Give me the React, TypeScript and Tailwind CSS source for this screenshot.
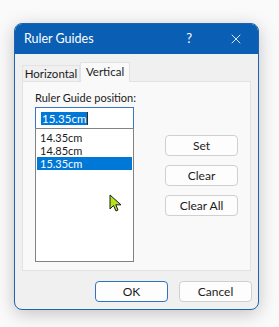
import { X } from "lucide-react";

const font = { fontFamily: 'Lato, "Liberation Sans", sans-serif' };

const Btn = ({ label, primary }: { label: string; primary?: boolean }) => (
  <button
    className={`flex h-[21px] w-[73px] items-center justify-center rounded-[4px] border bg-[#fdfdfd] text-[12px] leading-none text-[#1b1b1b] ${
      primary ? "border-[#2e73c3]" : "border-[#d0d0d0]"
    }`}
  >
    {label}
  </button>
);

const App = () => {
  const guides = ["14.35cm", "14.85cm", "15.35cm"];

  return (
    <div className="relative h-[327px] w-[279px] bg-[#fafafa] pl-[14px] pt-[23px]" style={font}>
      <div className="flex h-[287px] w-[245px] flex-col overflow-hidden rounded-[8px] border border-[#1f63ad] bg-[#f0f0f0] shadow-[0_4px_18px_rgba(0,0,0,0.22)]">
        {/* title bar */}
        <div className="flex h-[30px] shrink-0 items-center bg-[#0a5fb4] pl-[9px] text-white">
          <span className="whitespace-nowrap text-[12.5px]">Ruler Guides</span>
          <span className="ml-auto mr-[36px] text-[13px]">?</span>
          <X size={16} strokeWidth={1.3} className="mr-[14px]" />
        </div>

        {/* tabs */}
        <div className="flex h-[27px] shrink-0 items-end px-[7px]">
          <div className="flex h-[16px] w-[58px] items-center justify-center whitespace-nowrap border border-b-0 border-[#e2e2e2] bg-[#f0f0f0] text-[11.5px] leading-none text-[#1b1b1b]">
            Horizontal
          </div>
          <div className="relative top-[1px] -mr-px flex h-[20px] w-[50px] items-start justify-center whitespace-nowrap border border-b-0 border-[#e2e2e2] bg-[#f9f9f9] pt-[3px] text-[11.5px] leading-none text-[#1b1b1b]">
            Vertical
          </div>
        </div>

        {/* panel */}
        <div className="mx-[7px] flex h-[190px] border border-[#e2e2e2] bg-[#f9f9f9] pl-[12px] pt-[8px]">
          <div className="flex w-[99px] shrink-0 flex-col">
            <div className="h-[16px] whitespace-nowrap text-[11px] leading-[16px] text-[#1b1b1b]">Ruler Guide position:</div>
            <div className="mt-[1px] flex h-[22px] shrink-0 items-center border border-[#3a77c0] bg-white pl-[5px]">
              <span className="bg-[#0078d7] px-px text-[11.5px] leading-[13px] text-white">15.35cm</span>
              <span className="h-[13px] w-px bg-[#3a2a10]" />
            </div>
            <div className="-mt-px flex h-[134px] shrink-0 flex-col border border-[#828282] bg-white pt-[2px]">
              {guides.map((g, i) => (
                <div
                  key={g}
                  className={`mx-px flex h-[13px] items-center pl-[3px] text-[11px] leading-[13px] ${
                    i === 2 ? "bg-[#0078d7] text-white" : "text-[#1b1b1b]"
                  }`}
                >
                  {g}
                </div>
              ))}
            </div>
          </div>
          <div className="ml-[31px] flex flex-col gap-[9px] pt-[45px]">
            <Btn label="Set" />
            <Btn label="Clear" />
            <Btn label="Clear All" />
          </div>
        </div>

        {/* footer */}
        <div className="flex justify-end gap-[11px] pr-[6px] pt-[10px]">
          <Btn label="OK" primary />
          <Btn label="Cancel" />
        </div>
      </div>

      {/* mouse pointer */}
      <svg className="absolute left-[109px] top-[194px]" width="14" height="20" viewBox="0 0 14 20">
        <path d="M1 1 L1 15 L4.5 11.5 L7 17 L9 16 L6.8 10.8 L12 10.8 Z" fill="#b5e31d" stroke="#1a1a1a" strokeWidth="1" strokeLinejoin="round" />
      </svg>
    </div>
  );
};

export default App;
